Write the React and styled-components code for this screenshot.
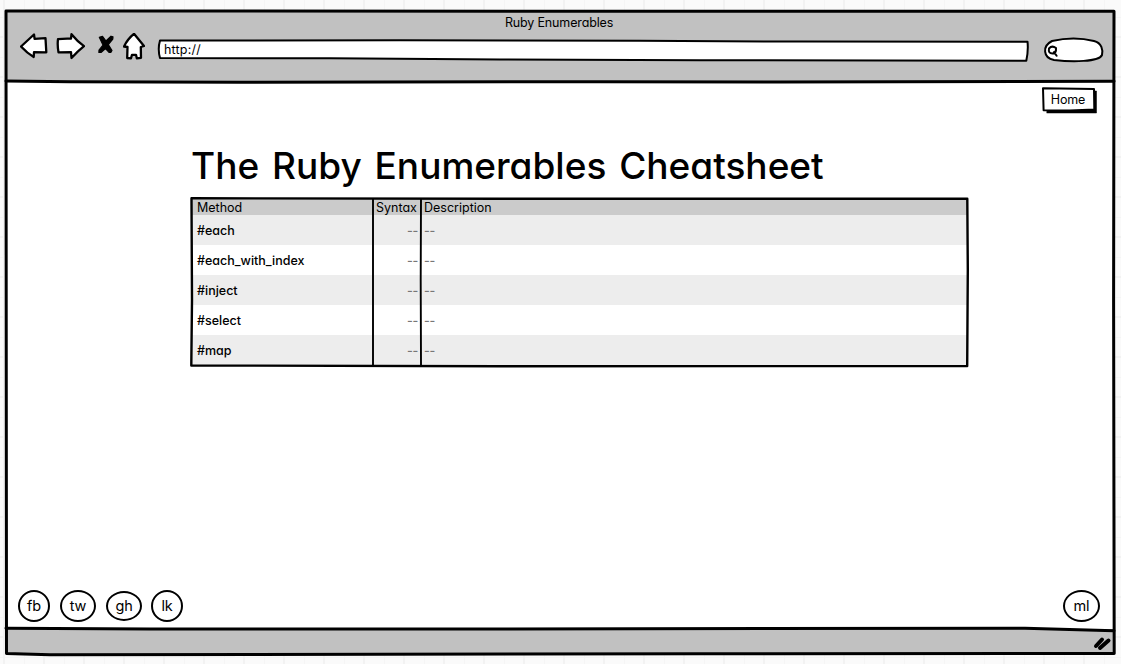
import React from "react";
import styled, { createGlobalStyle } from "styled-components";

const Global = createGlobalStyle`
  * { box-sizing: border-box; }
  body {
    margin: 0;
    color: #000;
    font: 400 12.5px/16px Inter, "Liberation Sans", sans-serif;
    font-feature-settings: "cv11" 1;
    overflow: hidden;
  }
`;

const Canvas = styled.main`
  width: 1121px;
  height: 664px;
  padding: 11px 7px 10px 6px;
  background-color: #fafafa;
  background-image:
    linear-gradient(90deg, #f2f2f2 2px, transparent 2px),
    linear-gradient(#f2f2f2 2px, transparent 2px),
    linear-gradient(90deg, #f5f5f5 1px, transparent 1px),
    linear-gradient(#f5f5f5 1px, transparent 1px);
  background-size: 40px 40px, 40px 40px, 20px 20px, 20px 20px;
  background-position: 3px 0, 0 36px, 4px 0, 0 17px;
`;

const Browser = styled.div`
  position: relative;
  display: flex;
  flex-direction: column;
  height: 643px;
  background: #fff;
`;

const Sketch = styled.svg`
  position: absolute;
  inset: 0;
  width: 100%;
  height: 100%;
  overflow: visible;
  pointer-events: none;
  fill: ${(p) => p.$fill || "none"};
  stroke: #000;
  stroke-width: ${(p) => p.$weight || 2}px;
  stroke-linejoin: round;
  stroke-linecap: round;
`;

const Shadow = styled.path`
  fill: #000;
  stroke-width: 0.5px;
`;

const TopBar = styled.header`
  height: 71px;
  background: #c1c1c1;
`;

const WindowTitle = styled.div`
  height: 22px;
  padding-top: 4px;
  padding-right: 2px;
  text-align: center;
  letter-spacing: -0.15px;
`;

const Toolbar = styled.div`
  display: flex;
  align-items: flex-start;
  padding-left: 14px;
`;

const Nav = styled.nav`
  display: flex;
  gap: 8px;
  width: 138px;
  height: 28px;
`;

const NavIcon = styled.svg`
  width: ${(p) => p.$w}px;
  height: 28px;
  fill: #fff;
  stroke: #000;
  stroke-width: 2.3px;
  stroke-linejoin: round;
  stroke-linecap: round;
`;

const AddressField = styled.div`
  position: relative;
  width: 870px;
  height: 21px;
  margin-top: 7px;
  padding: 2px 0 0 6px;
  letter-spacing: 0.2px;
`;

const SearchField = styled.div`
  position: relative;
  width: 60px;
  height: 24px;
  margin: 5px 0 0 16px;
`;

const Label = styled.span`
  position: relative;
`;

const Content = styled.section`
  display: flex;
  flex-direction: column;
  height: 547px;
`;

const HomeButton = styled.button`
  position: relative;
  align-self: flex-end;
  width: 52px;
  height: 22px;
  margin: 6px 19px 0 0;
  padding: 2px 2px 0 0;
  border: 0;
  background: none;
  color: #000;
  font: inherit;
  letter-spacing: -0.1px;
`;

const Heading = styled.h1`
  margin: 33px 0 0 185px;
  height: 46px;
  font-size: 37px;
  font-weight: 450;
  line-height: 46px;
  letter-spacing: 0;
  word-spacing: 3px;
  white-space: nowrap;
`;

const Sheet = styled.div`
  position: relative;
  width: 776px;
  height: 168px;
  margin: 9px 0 0 185px;
  padding-top: 1px;
`;

const Row = styled.div`
  display: grid;
  grid-template-columns: 182px 48px 1fr;
  align-items: center;
  height: ${(p) => (p.$head ? 16 : 30)}px;
  padding-top: ${(p) => (p.$head ? 1 : 2)}px;
  background: ${(p) => (p.$head ? "#cbcbcb" : p.$shade ? "#ededed" : "#fff")};
  font-weight: ${(p) => (p.$head ? 400 : 450)};
  line-height: ${(p) => (p.$head ? 15 : 16)}px;
`;

const Cell = styled.span`
  padding: 0 3px;
  text-align: ${(p) => (p.$end ? "right" : "left")};
  color: ${(p) => (p.$dim ? "#777" : "#000")};
  ${(p) => p.$first && "padding-left: 6px;"}
  ${(p) => p.$dim && "letter-spacing: -0.3px;"}
  white-space: nowrap;
`;

const Links = styled.footer`
  display: flex;
  align-items: center;
  height: 34px;
  margin: auto 14px 6px 12px;
`;

const Bubble = styled.a`
  display: grid;
  place-items: center;
  width: ${(p) => p.$w}px;
  height: ${(p) => p.$h || 32}px;
  margin-left: ${(p) => p.$gap || 0};
  border: 2px solid #000;
  border-radius: 50%;
  font-size: 14.5px;
  letter-spacing: -0.2px;
`;

const StatusBar = styled.div`
  position: relative;
  flex: 1;
  background: #c1c1c1;
`;

const methods = ["#each", "#each_with_index", "#inject", "#select", "#map"];

export default function App() {
  return (
    <>
      <Global />
      <Canvas>
        <Browser>
          <TopBar>
            <WindowTitle>Ruby Enumerables</WindowTitle>
            <Toolbar>
              <Nav>
                <NavIcon $w={28} viewBox="20 33 28 28">
                  <path d="M21 46.5 34 34.5 34.6 38.8 45.5 38.2 46.3 52.3 34 52.2 33.7 57Q27 53 21 46.5Z" />
                </NavIcon>
                <NavIcon $w={29} viewBox="56 33 29 28">
                  <path d="M58 39.2Q64 38.4 71 38.7L71.5 34.2Q77 41 84 46.2 78 51 71.5 58L71 52.2 58.5 52.4Q57.2 45 58 39.2Z" />
                </NavIcon>
                <NavIcon $w={22} viewBox="93 33 22 28">
                  <path d="M99.3 37.3 102.5 36.3 106 41 111 36.2 113 36.8 112.8 39 108.3 44.6 112 50.5 110.8 52.5 109 52.3 105.5 48.5 101 52.5 98.9 52.4 99 50 103 45Z" fill="#000" strokeWidth="1.2" />
                </NavIcon>
                <NavIcon $w={22} viewBox="123 33 22 28">
                  <path d="M134 33.8 144 46 140.8 47 141 57.8 136.8 58.3 136 54.8H132L131 58.3 127.2 58 127.5 47 124 46.5Q127.5 39 134 33.8Z" />
                </NavIcon>
              </Nav>
              <AddressField>
                <Sketch $fill="#fff" viewBox="158 40 870 21" preserveAspectRatio="none">
                  <path d="M160 40.5 400 40.2 640 40.8 800 41.6 1027.5 41.7Q1028.5 50 1026.3 60.8L700 60.2 500 59.5 330 58.3 160 58Q157.5 49 160 40.5Z" />
                </Sketch>
                <Label>http://</Label>
              </AddressField>
              <SearchField>
                <Sketch $fill="#fff" viewBox="1044 38 60 24">
                  <path d="M1052 41Q1074 36 1094 41C1102 43 1103 50 1102 55C1099 62 1072 62 1054 60C1043 58 1042 46 1052 41Z" />
                  <path d="M1049 48.5Q1052 45 1056 48 1056.5 53 1052.5 53.5 1048 53.5 1049 48.5ZM1054 52 1056.6 55.8" />
                </Sketch>
              </SearchField>
            </Toolbar>
          </TopBar>
          <Content>
            <HomeButton>
              <Sketch $fill="#fff" viewBox="1043 88 52 22">
                <Shadow d="M1047 91H1096.5V113H1047Z" />
                <path d="M1043 88.3 1094 89 1094.3 109.5 1070 110.5 1043.6 110.3Z" />
              </Sketch>
              <Label>Home</Label>
            </HomeButton>
            <Heading>The Ruby Enumerables Cheatsheet</Heading>
            <Sheet>
              <Row $head>
                <Cell $first>Method</Cell>
                <Cell>Syntax</Cell>
                <Cell>Description</Cell>
              </Row>
              {methods.map((name, i) => (
                <Row key={name} $shade={i % 2 === 0}>
                  <Cell $first>{name}</Cell>
                  <Cell $end $dim>--</Cell>
                  <Cell $dim>--</Cell>
                </Row>
              ))}
              <Sketch $weight={2.4} viewBox="191 198 776 168">
                <path d="M191.5 198.3 500 198.8 967.3 198.8 967.8 270 967.2 366 500 366.3 191.3 365.5 192 300Z" />
              </Sketch>
              <Sketch $weight={1.9} viewBox="191 198 776 168">
                <path d="M373 199V365M421 199 420.7 280 421 365" />
              </Sketch>
            </Sheet>
            <Links>
              <Bubble $w={32}>fb</Bubble>
              <Bubble $w={36} $gap="10px">tw</Bubble>
              <Bubble $w={36} $h={30} $gap="10px">gh</Bubble>
              <Bubble $w={32} $gap="9px">lk</Bubble>
              <Bubble $w={37} $gap="auto">ml</Bubble>
            </Links>
          </Content>
          <StatusBar />
          <Sketch $weight={3} viewBox="6 11 1108 643">
            <path d="M6 11 600 11.2 1114 11.2 1113.6 300 1114.2 653.5 700 653.8 50 654.7 6.5 653.5 6.2 300Z" />
            <path d="M6 81 70 81.8 240 82.3 600 81.7 780 82 1114 81.2" />
            <path d="M6 628.3 150 629 500 629 1025 628.2 1114 630.8" />
            <path d="M1096 646 1102 639.5M1100 648 1108.5 640.5" strokeWidth="4" />
          </Sketch>
        </Browser>
      </Canvas>
    </>
  );
}
